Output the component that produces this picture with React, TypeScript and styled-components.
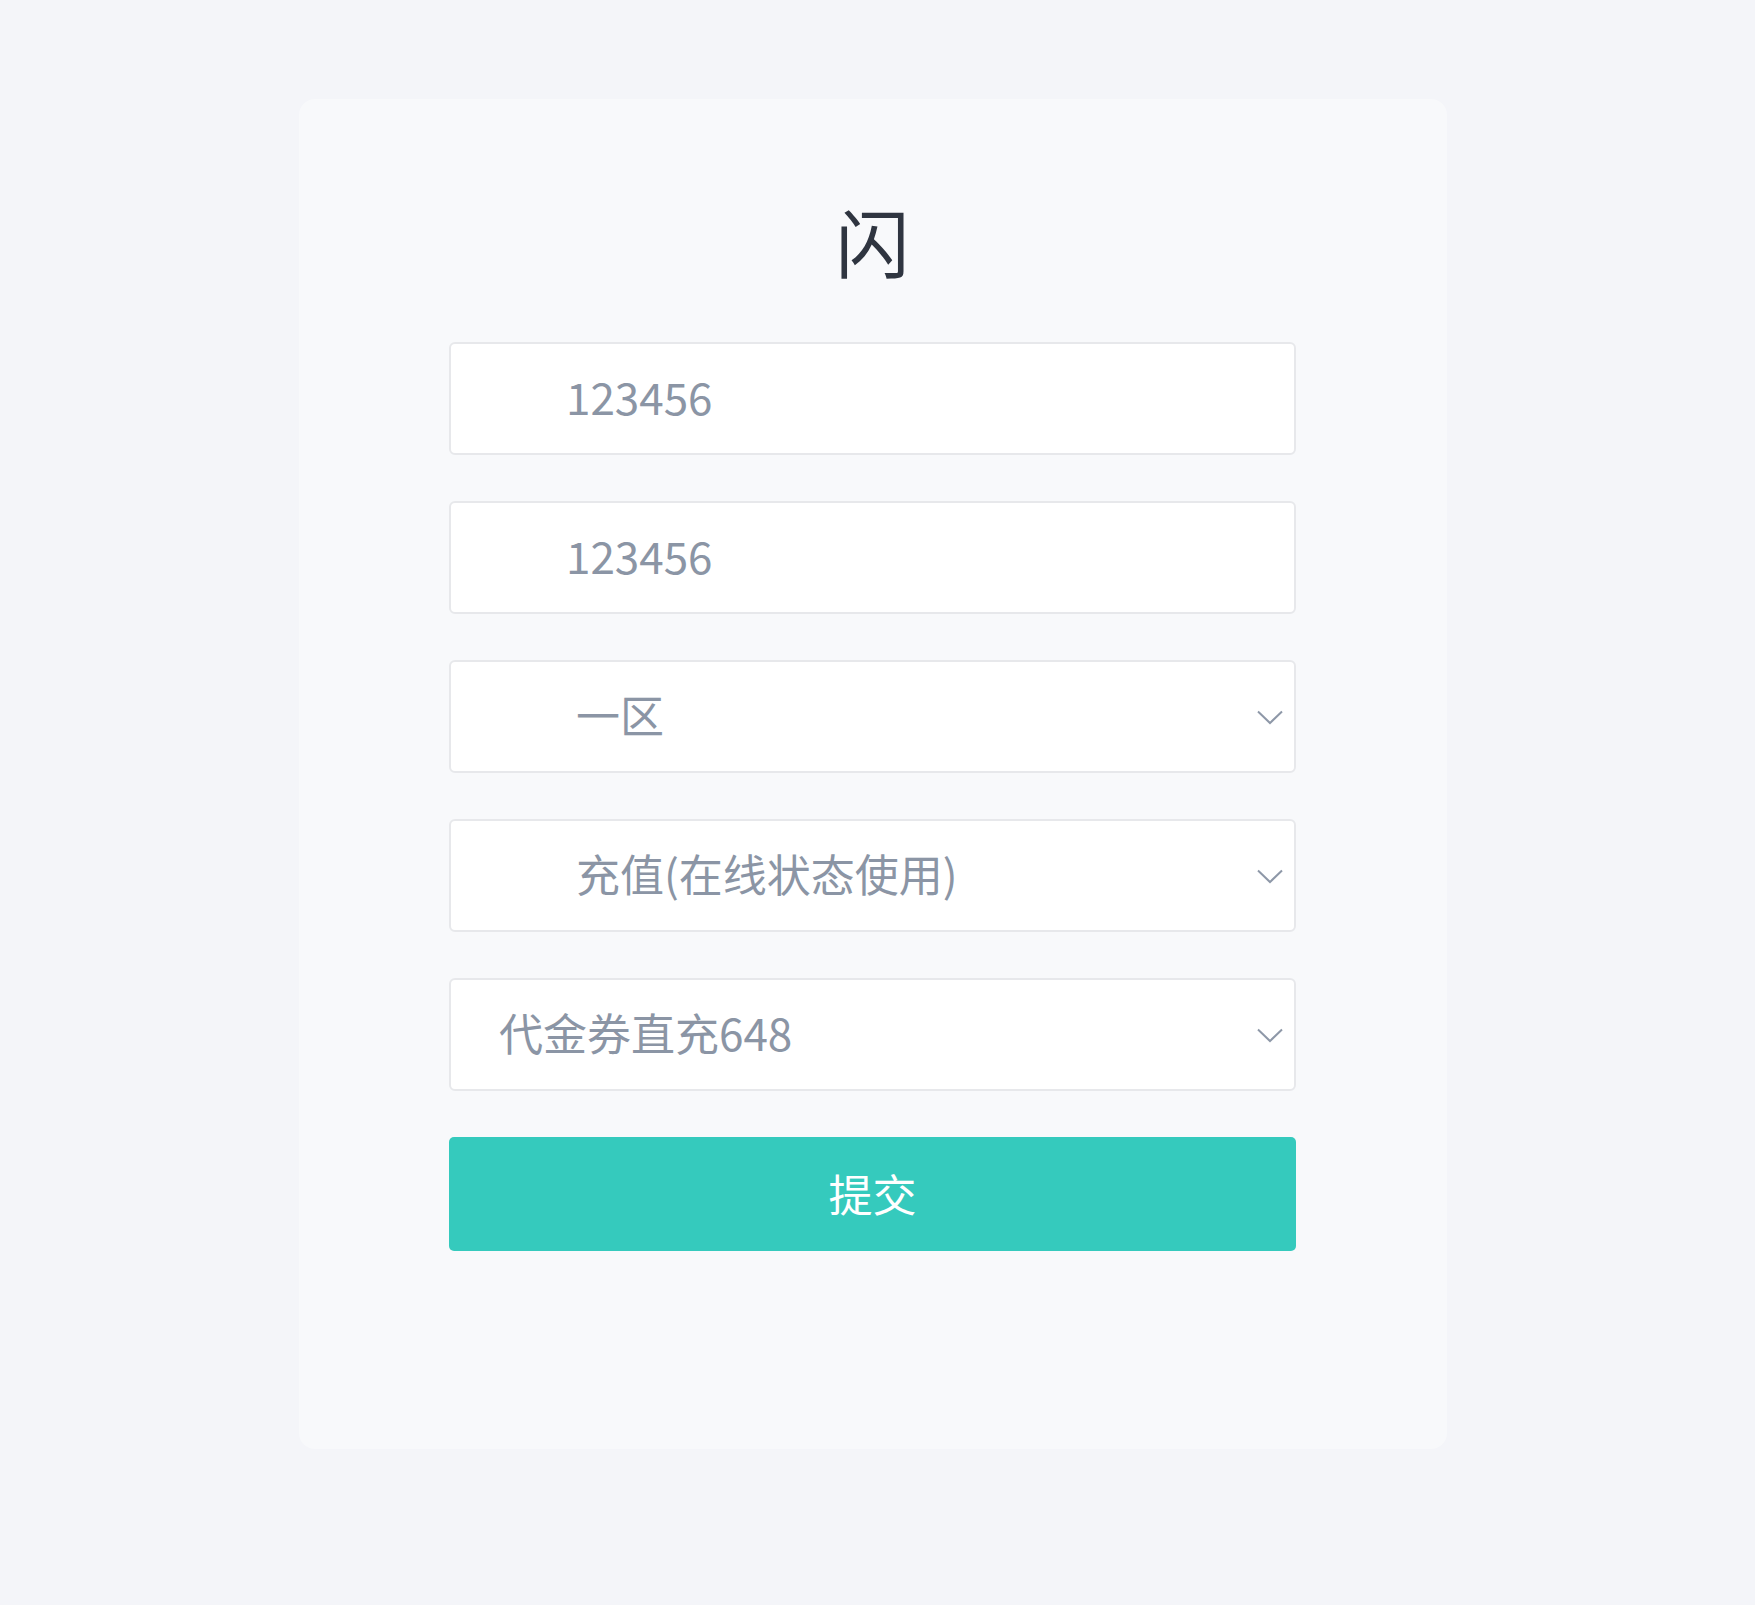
import React from "react";
import styled, { createGlobalStyle } from "styled-components";

const Global = createGlobalStyle`
  html, body {
    margin: 0;
    padding: 0;
    background: #f4f5f9;
    font-family: "Noto Sans CJK SC", "Noto Sans", sans-serif;
  }
  #root { min-height: 1605px; }
`;

const Page = styled.div`
  display: flex;
  padding: 99px 0 0 299px;
`;

const Card = styled.div`
  width: 1148px;
  height: 1350px;
  box-sizing: border-box;
  background: #f8f9fb;
  border-radius: 16px;
  padding: 104px 151px 0 150px;
  display: flex;
  flex-direction: column;
  align-items: stretch;
`;

const Title = styled.h1`
  margin: 0 0 65px;
  font-size: 74px;
  line-height: 74px;
  font-weight: 400;
  color: #2f3540;
  text-align: center;
`;

const Form = styled.form`
  display: flex;
  flex-direction: column;
  gap: 46px;
`;

const fieldBase = `
  width: 100%;
  height: 113px;
  box-sizing: border-box;
  border: 2px solid #e7e8eb;
  border-radius: 6px;
  background: #ffffff;
  color: #8b95a5;
  font-family: "Noto Sans CJK SC", "Noto Sans", sans-serif;
  font-size: 44px;
  outline: none;
  margin: 0;
`;

const TextInput = styled.input<{ $pad: number }>`
  ${fieldBase}
  padding: 0 0 5px ${(p) => p.$pad}px;
  display: block;
`;

const SelectWrap = styled.div`
  position: relative;
  height: 113px;
`;

const Select = styled.select<{ $pad: number }>`
  ${fieldBase}
  appearance: none;
  -webkit-appearance: none;
  padding: 0 60px 5px ${(p) => p.$pad}px;
  display: block;
`;

const Chevron = styled.svg`
  position: absolute;
  right: 13px;
  top: 50%;
  width: 26px;
  height: 15px;
  margin-top: -7px;
  pointer-events: none;
`;

const Submit = styled.button`
  height: 114px;
  border: none;
  border-radius: 5px;
  background: #35cabd;
  color: #ffffff;
  font-family: "Noto Sans CJK SC", "Noto Sans", sans-serif;
  font-size: 44px;
  cursor: pointer;
  padding: 0 0 2px;
`;

const ChevronIcon = () => (
  <Chevron viewBox="0 0 26 15" fill="none">
    <polyline points="1,1.5 13,13 25,1.5" stroke="#8e98a8" strokeWidth="2" />
  </Chevron>
);

type Opt = { pad: number; value: string };

const SelectField = ({ pad, value }: Opt) => (
  <SelectWrap>
    <Select $pad={pad} defaultValue={value}>
      <option value={value}>{value}</option>
    </Select>
    <ChevronIcon />
  </SelectWrap>
);

export default function App() {
  return (
    <>
      <Global />
      <Page>
        <Card>
          <Title>闪</Title>
          <Form onSubmit={(e) => e.preventDefault()}>
            <TextInput $pad={115} defaultValue="123456" />
            <TextInput $pad={115} defaultValue="123456" />
            <SelectField pad={125} value="一区" />
            <SelectField pad={125} value="充值(在线状态使用)" />
            <SelectField pad={48} value="代金券直充648" />
            <Submit type="submit">提交</Submit>
          </Form>
        </Card>
      </Page>
    </>
  );
}
